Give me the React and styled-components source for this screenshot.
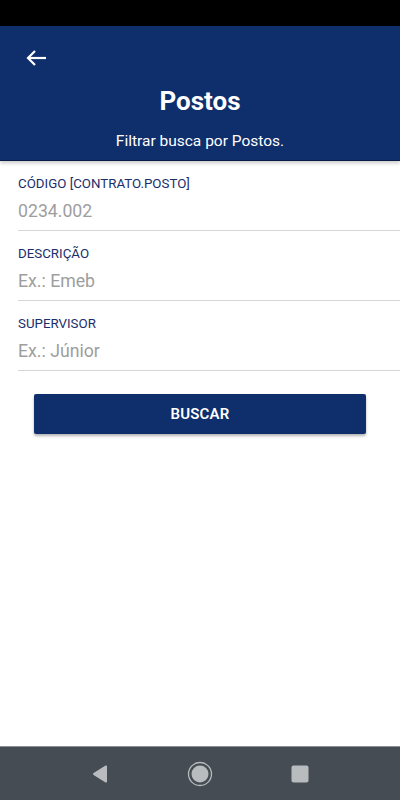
import React from 'react'
import styled, { createGlobalStyle } from 'styled-components'

const GlobalStyles = createGlobalStyle`
    html, body {
        margin: 0;
        padding: 0;
        background: #ffffff;
        font-family: Roboto, "Noto Sans", "Liberation Sans", sans-serif;
    }
    * { box-sizing: border-box; }
`

const Pantalla = styled.div`
    width: 400px;
    height: 800px;
    display: flex;
    flex-direction: column;
    background: #ffffff;
`
const BarraEstado = styled.div`
    height: 26px;
    background: #000000;
    flex-shrink: 0;
`
const Cabecera = styled.header`
    height: 135px;
    background: #0e2e6c;
    border-bottom: 1px solid #081c4a;
    box-shadow: 0 2px 4px rgba(0, 0, 0, 0.22);
    display: flex;
    flex-direction: column;
    align-items: center;
    padding-top: 20px;
    position: relative;
    z-index: 1;
    flex-shrink: 0;
`
const BotonVolver = styled.button`
    align-self: flex-start;
    margin-left: 23px;
    width: 26px;
    height: 24px;
    padding: 0;
    background: none;
    border: none;
    display: flex;
    align-items: center;
    justify-content: center;
`
const Titulo = styled.h1`
    margin: 16px 0 0;
    font-size: 26px;
    font-weight: 700;
    color: #ffffff;
    line-height: 30px;
`
const Subtitulo = styled.p`
    margin: 16px 0 0;
    font-size: 15.5px;
    color: #ffffff;
    line-height: 18px;
`
const Formulario = styled.div`
    display: flex;
    flex-direction: column;
    padding-left: 18px;
`
const Campo = styled.div`
    height: 70px;
    border-bottom: 1px solid #d6d6d6;
    display: flex;
    flex-direction: column;
    padding-top: 15px;
`
const Etiqueta = styled.label`
    font-size: 13.3px;
    color: #1a2e6b;
    line-height: 16px;
`
const Entrada = styled.input`
    margin-top: 8px;
    border: none;
    outline: none;
    padding: 0;
    font-family: inherit;
    font-size: 17.7px;
    line-height: 22px;
    color: #9e9e9e;
    background: transparent;
    &::placeholder { color: #9e9e9e; }
`
const ZonaBoton = styled.div`
    padding: 23px 34px 0;
    flex: 1;
`
const BotonBuscar = styled.button`
    width: 100%;
    height: 40px;
    border: none;
    border-radius: 2px;
    background: #0e2e6c;
    color: #ffffff;
    font-family: inherit;
    font-size: 15px;
    font-weight: 600;
    letter-spacing: 0.2px;
    box-shadow: 0 2px 3px rgba(0, 0, 0, 0.3);
`
const BarraNav = styled.nav`
    height: 54px;
    background: #454c53;
    border-top: 1px solid #8a9096;
    display: flex;
    align-items: center;
    justify-content: center;
    gap: 72px;
    flex-shrink: 0;
`
const IconoNav = styled.div`
    width: 28px;
    height: 28px;
    display: flex;
    align-items: center;
    justify-content: center;
`

const campos = [
    { etiqueta: 'CÓDIGO [CONTRATO.POSTO]', ejemplo: '0234.002' },
    { etiqueta: 'DESCRIÇÃO', ejemplo: 'Ex.: Emeb' },
    { etiqueta: 'SUPERVISOR', ejemplo: 'Ex.: Júnior' },
]

export default function App() {
    return (
        <>
            <GlobalStyles />
            <Pantalla>
                <BarraEstado />
                <Cabecera>
                    <BotonVolver>
                        <svg width="20" height="18" viewBox="0 0 20 18" fill="none" stroke="#ffffff" strokeWidth="2.2" strokeLinecap="square">
                            <path d="M19 9H3" />
                            <path d="M9 2L2 9l7 7" strokeLinejoin="miter" strokeLinecap="butt" />
                        </svg>
                    </BotonVolver>
                    <Titulo>Postos</Titulo>
                    <Subtitulo>Filtrar busca por Postos.</Subtitulo>
                </Cabecera>
                <Formulario>
                    {campos.map(c => (
                        <Campo key={c.etiqueta}>
                            <Etiqueta>{c.etiqueta}</Etiqueta>
                            <Entrada placeholder={c.ejemplo} />
                        </Campo>
                    ))}
                </Formulario>
                <ZonaBoton>
                    <BotonBuscar>BUSCAR</BotonBuscar>
                </ZonaBoton>
                <BarraNav>
                    <IconoNav>
                        <svg width="18" height="20" viewBox="0 0 18 20">
                            <path d="M16 2.5v15a1 1 0 0 1-1.5.9L2.6 10.9a1 1 0 0 1 0-1.8L14.5 1.6A1 1 0 0 1 16 2.5z" fill="#b9bcbe" />
                        </svg>
                    </IconoNav>
                    <IconoNav>
                        <svg width="26" height="26" viewBox="0 0 26 26">
                            <circle cx="13" cy="13" r="11.5" fill="none" stroke="#b9bcbe" strokeWidth="1.3" />
                            <circle cx="13" cy="13" r="8.5" fill="#b9bcbe" />
                        </svg>
                    </IconoNav>
                    <IconoNav>
                        <svg width="18" height="18" viewBox="0 0 18 18">
                            <rect x="0.5" y="0.5" width="17" height="17" rx="2" fill="#b9bcbe" />
                        </svg>
                    </IconoNav>
                </BarraNav>
            </Pantalla>
        </>
    )
}
